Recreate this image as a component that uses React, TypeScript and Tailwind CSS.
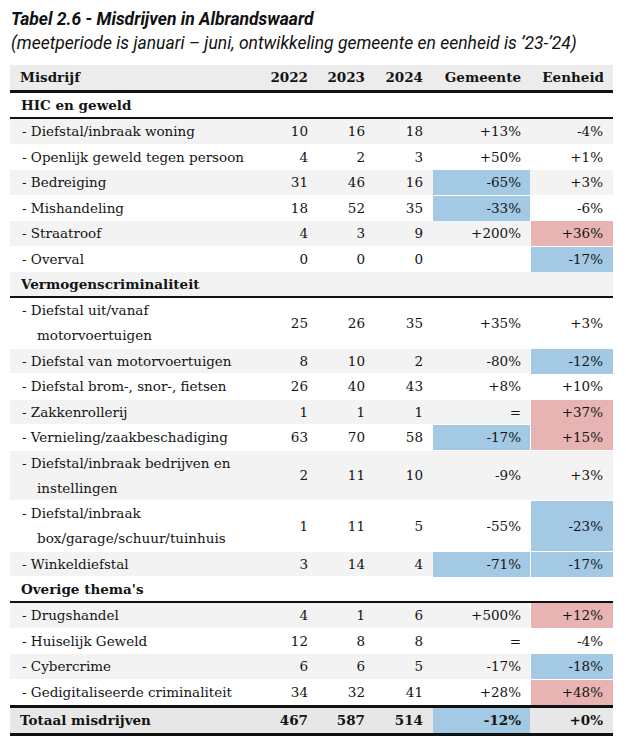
import React from "react";

type C = "b" | "r" | undefined;
type R = {
  label: string[];
  a: string;
  b: string;
  c: string;
  g: string;
  e: string;
  gc?: C;
  ec?: C;
};
type Section = { title: string; rows: R[] };

const sections: Section[] = [
  {
    title: "HIC en geweld",
    rows: [
      { label: ["- Diefstal/inbraak woning"], a: "10", b: "16", c: "18", g: "+13%", e: "-4%" },
      { label: ["- Openlijk geweld tegen persoon"], a: "4", b: "2", c: "3", g: "+50%", e: "+1%" },
      { label: ["- Bedreiging"], a: "31", b: "46", c: "16", g: "-65%", e: "+3%", gc: "b" },
      { label: ["- Mishandeling"], a: "18", b: "52", c: "35", g: "-33%", e: "-6%", gc: "b" },
      { label: ["- Straatroof"], a: "4", b: "3", c: "9", g: "+200%", e: "+36%", ec: "r" },
      { label: ["- Overval"], a: "0", b: "0", c: "0", g: "", e: "-17%", ec: "b" },
    ],
  },
  {
    title: "Vermogenscriminaliteit",
    rows: [
      { label: ["- Diefstal uit/vanaf", "motorvoertuigen"], a: "25", b: "26", c: "35", g: "+35%", e: "+3%" },
      { label: ["- Diefstal van motorvoertuigen"], a: "8", b: "10", c: "2", g: "-80%", e: "-12%", ec: "b" },
      { label: ["- Diefstal brom-, snor-, fietsen"], a: "26", b: "40", c: "43", g: "+8%", e: "+10%" },
      { label: ["- Zakkenrollerij"], a: "1", b: "1", c: "1", g: "=", e: "+37%", ec: "r" },
      { label: ["- Vernieling/zaakbeschadiging"], a: "63", b: "70", c: "58", g: "-17%", e: "+15%", gc: "b", ec: "r" },
      { label: ["- Diefstal/inbraak bedrijven en", "instellingen"], a: "2", b: "11", c: "10", g: "-9%", e: "+3%" },
      { label: ["- Diefstal/inbraak", "box/garage/schuur/tuinhuis"], a: "1", b: "11", c: "5", g: "-55%", e: "-23%", ec: "b" },
      { label: ["- Winkeldiefstal"], a: "3", b: "14", c: "4", g: "-71%", e: "-17%", gc: "b", ec: "b" },
    ],
  },
  {
    title: "Overige thema's",
    rows: [
      { label: ["- Drugshandel"], a: "4", b: "1", c: "6", g: "+500%", e: "+12%", ec: "r" },
      { label: ["- Huiselijk Geweld"], a: "12", b: "8", c: "8", g: "=", e: "-4%" },
      { label: ["- Cybercrime"], a: "6", b: "6", c: "5", g: "-17%", e: "-18%", ec: "b" },
      { label: ["- Gedigitaliseerde criminaliteit"], a: "34", b: "32", c: "41", g: "+28%", e: "+48%", ec: "r" },
    ],
  },
];

const GRID = "grid grid-cols-[251px_57px_57px_58px_97px_83px]";

function colorClass(c: C) {
  if (c === "b") return "bg-[#a3c9e4]";
  if (c === "r") return "bg-[#e8b4b3]";
  return "";
}

function DataRow({ r, gray }: { r: R; gray: boolean }) {
  const double = r.label.length > 1;
  return (
    <div
      className={`${GRID} ${double ? "h-[50.5px]" : "h-[25.5px]"} border-b border-white ${
        gray ? "bg-[#f3f3f3]" : "bg-white"
      }`}
    >
      <div className="flex flex-col justify-center pl-[12px] whitespace-nowrap">
        {r.label.map((l, i) => (
          <div key={i} className={`leading-[25px] ${i > 0 ? "pl-[15px]" : ""}`}>
            {l}
          </div>
        ))}
      </div>
      <div className="flex items-center justify-end pr-[10px]">{r.a}</div>
      <div className="flex items-center justify-end pr-[10px]">{r.b}</div>
      <div className="flex items-center justify-end pr-[10px]">{r.c}</div>
      <div className={`flex items-center justify-end pr-[9px] ${colorClass(r.gc)}`}>{r.g}</div>
      <div
        className={`flex items-center justify-end pr-[10px] ${colorClass(r.ec)} ${
          r.ec ? "border-l border-white" : ""
        }`}
      >
        {r.e}
      </div>
    </div>
  );
}

export default function App() {
  let idx = 0;
  const rows: React.ReactNode[] = [];
  sections.forEach((s, si) => {
    const secGray = idx % 2 === 1;
    idx++;
    rows.push(
      <div
        key={`s${si}`}
        className={`h-[26px] flex items-center pl-[11px] font-bold border-b-2 border-[#111] ${
          secGray ? "bg-[#f3f3f3]" : "bg-white"
        }`}
      >
        {s.title}
      </div>
    );
    s.rows.forEach((r, ri) => {
      const g = idx % 2 === 1;
      idx++;
      rows.push(<DataRow key={`r${si}-${ri}`} r={r} gray={g} />);
    });
  });

  return (
    <div className="w-[626px] h-[740px] bg-white text-[#141414]">
      <div className="pl-[11px] pt-[8px] font-['Roboto',sans-serif] text-[#111]">
        <div className="text-[17.5px] leading-[23px] font-bold italic">
          Tabel 2.6 - Misdrijven in Albrandswaard
        </div>
        <div className="text-[17.5px] leading-[24px] italic">
          (meetperiode is januari – juni, ontwikkeling gemeente en eenheid is ’23-’24)
        </div>
      </div>
      <div className="ml-[10px] mt-[10px] w-[603px] font-['DejaVu_Serif',serif] text-[13.5px]">
        <div className={`${GRID} h-[28px] bg-[#ececec] border-b-[3px] border-[#111] font-bold`}>
          <div className="flex items-center pl-[10px]">Misdrijf</div>
          <div className="flex items-center justify-end pr-[10px]">2022</div>
          <div className="flex items-center justify-end pr-[10px]">2023</div>
          <div className="flex items-center justify-end pr-[10px]">2024</div>
          <div className="flex items-center justify-end pr-[9px]">Gemeente</div>
          <div className="flex items-center justify-end pr-[9px]">Eenheid</div>
        </div>
        {rows}
        <div
          className={`${GRID} h-[31px] bg-[#e7e7e7] border-t-[3px] border-b-[3px] border-[#111] font-bold`}
        >
          <div className="flex items-center pl-[10px]">Totaal misdrijven</div>
          <div className="flex items-center justify-end pr-[10px]">467</div>
          <div className="flex items-center justify-end pr-[10px]">587</div>
          <div className="flex items-center justify-end pr-[10px]">514</div>
          <div className="flex items-center justify-end pr-[9px] bg-[#a3c9e4]">-12%</div>
          <div className="flex items-center justify-end pr-[10px]">+0%</div>
        </div>
      </div>
    </div>
  );
}
